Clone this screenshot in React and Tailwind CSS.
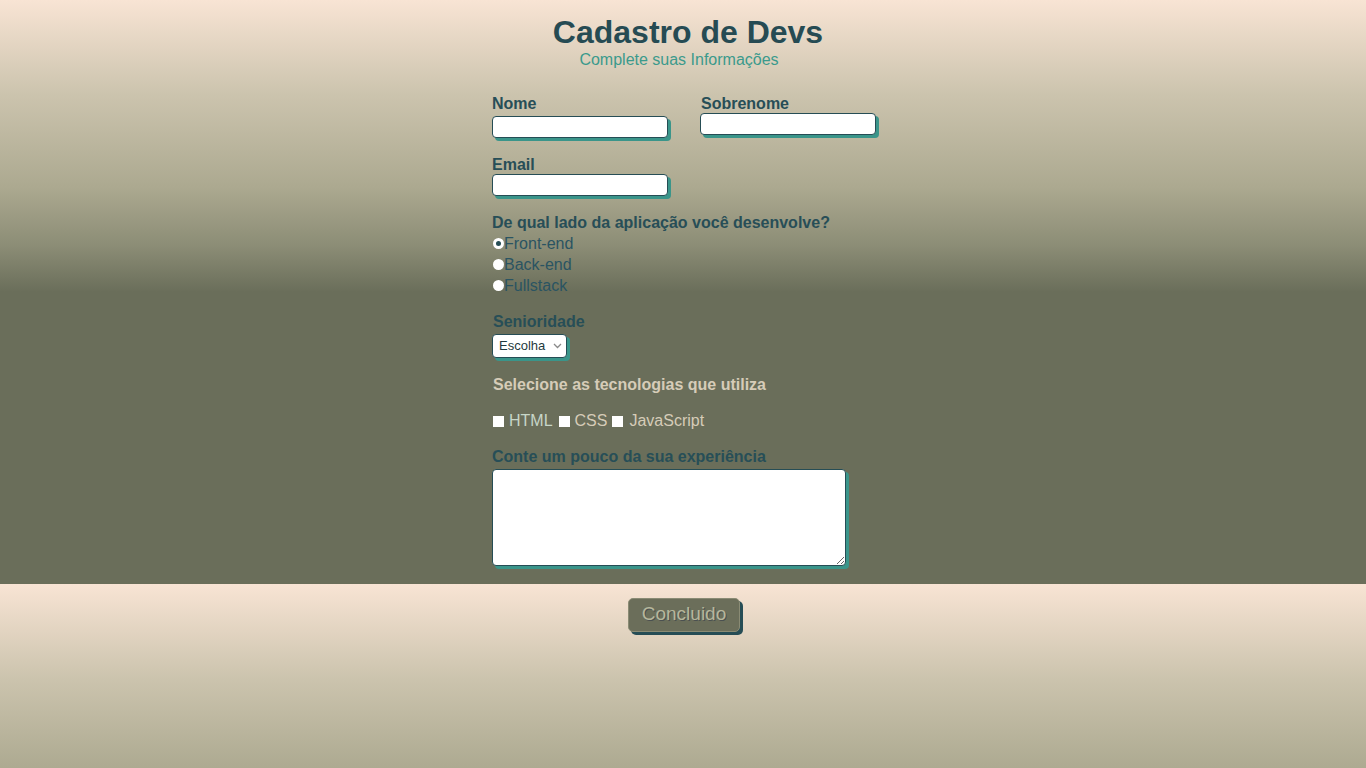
import React, { useState } from 'react';

const label = "block pt-[1px] text-[16px] leading-[18px] font-bold text-[#274e57]";
const field = "block bg-white border border-[#264d55] rounded-[4px] shadow-[3px_3px_0_#3a958a] outline-none";

export default function App() {
  const [side, setSide] = useState('front');

  return (
    <div className="min-h-screen w-full bg-[linear-gradient(180deg,#f8e4d4_0%,#ccc4ae_16%,#aca990_32%,#8c8d76_42%,#6a6e5a_50%,#6a6e5a_100%)] bg-[length:100%_584px] bg-repeat font-['Liberation_Sans',Arial,sans-serif]">
      {/* header */}
      <div className="pt-[14px] text-center">
        <h1 className="pl-[10px] text-[32px] leading-[36px] font-bold text-[#264b53]">Cadastro de Devs</h1>
        <p className="pt-[1px] pr-[8px] text-[16px] leading-[18px] text-[#3b9a8c]">Complete suas Informações</p>
      </div>

      <form className="w-[382px] mx-auto pt-[25px]" onSubmit={(e) => e.preventDefault()}>
        <div className="flex gap-[32px]">
          <div className="w-[176px]">
            <label className={label}>Nome</label>
            <input type="text" className={`${field} mt-[3px] w-[176px] h-[22px]`} />
          </div>
          <div className="w-[176px]">
            <label className={`${label} pl-[1px]`}>Sobrenome</label>
            <input type="text" className={`${field} mt-0 w-[176px] h-[22px]`} />
          </div>
        </div>

        <div className="mt-[17px]">
          <label className={label}>Email</label>
          <input type="email" className={`${field} mt-0 w-[176px] h-[22px]`} />
        </div>

        <div className="mt-[17px]">
          <label className={label}>De qual lado da aplicação você desenvolve?</label>
          <div className="mt-[1px]">
            {[
              ['front', 'Front-end'],
              ['back', 'Back-end'],
              ['full', 'Fullstack'],
            ].map(([v, t]) => (
              <label key={v} className="flex items-center h-[21px] text-[16px] text-[#2a5462]">
                <input
                  type="radio"
                  name="side"
                  checked={side === v}
                  onChange={() => setSide(v)}
                  className="appearance-none ml-[1px] w-[11px] h-[11px] rounded-full bg-white checked:bg-[#264d55] checked:border-[3px] checked:border-white"
                />
                {t}
              </label>
            ))}
          </div>
        </div>

        <div className="mt-[16px]">
          <label className={`${label} pl-[1px]`}>Senioridade</label>
          <div className="relative mt-[3px] w-[75px]">
            <select className={`${field} appearance-none w-[75px] h-[24px] pl-[6px] text-[13px] text-[#1f3a40]`}>
              <option>Escolha</option>
              <option>Júnior</option>
              <option>Pleno</option>
              <option>Sênior</option>
            </select>
            <svg className="absolute right-[5px] top-[9px] pointer-events-none" width="9" height="6" viewBox="0 0 9 6">
              <path d="M1 1l3.5 3.5L8 1" fill="none" stroke="#8a8a8a" strokeWidth="1.3" />
            </svg>
          </div>
        </div>

        <div className="mt-[17px]">
          <label className="block pt-[1px] pl-[1px] text-[16px] leading-[18px] font-bold text-[#d6ccb8]">Selecione as tecnologias que utiliza</label>
          <div className="mt-[18px] flex items-center h-[18px] text-[16px] text-[#d6ccb8]">
            <input type="checkbox" className="appearance-none ml-[1px] w-[11px] h-[11px] bg-white" />
            <span className="ml-[5px] text-[#c7d6c8]">HTML</span>
            <input type="checkbox" className="appearance-none ml-[6px] w-[11px] h-[11px] bg-white" />
            <span className="ml-[5px]">CSS</span>
            <input type="checkbox" className="appearance-none ml-[5px] w-[11px] h-[11px] bg-white" />
            <span className="ml-[6px]">JavaScript</span>
          </div>
        </div>

        <div className="mt-[17px]">
          <label className={label}>Conte um pouco da sua experiência</label>
          <textarea className={`${field} mt-[3px] w-[354px] h-[97px]`} />
        </div>

        <div className="pt-[32px] flex justify-center pl-[2px]">
          <button
            type="submit"
            className="w-[112px] h-[34px] pb-[2px] rounded-[5px] bg-[#6b6e5a] border border-[#8a8b74] shadow-[3px_3px_0_#264d55] text-[19px] text-[#b6b79c] [text-shadow:1px_1px_0_#4a5050]"
          >
            Concluido
          </button>
        </div>
      </form>
    </div>
  );
}
